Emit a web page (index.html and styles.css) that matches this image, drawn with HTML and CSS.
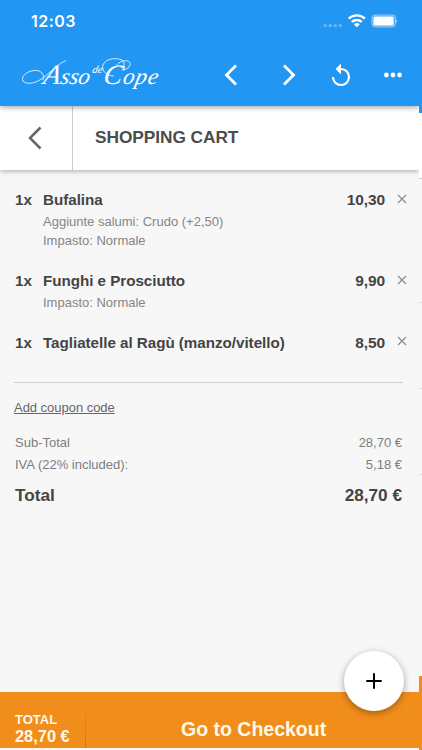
FILE: index.html
```html
<!DOCTYPE html>
<html lang="en">
<head>
<meta charset="utf-8">
<meta name="viewport" content="width=device-width">
<title>Shopping cart</title>
<link rel="stylesheet" href="styles.css">
</head>
<body>
<div class="screen">
  <div class="app">
    <header class="topbar">
      <div class="status">
        <span class="clock">12:03</span>
        <svg class="status-icons" width="78" height="18" viewBox="0 0 78 18" fill="#fff">
          <g opacity=".32"><circle cx="5.300" cy="13.600" r="1.700"/><circle cx="10.300" cy="13.600" r="1.700"/><circle cx="15.300" cy="13.600" r="1.700"/><circle cx="20.300" cy="13.600" r="1.700"/></g>
          <g fill="none" stroke="#fff" stroke-width="2.400"><path d="M28.700 6.600a11.800 11.800 0 0 1 16.200 0"/><path d="M31.800 10a7.200 7.200 0 0 1 10 0"/></g>
          <path d="M36.800 15.300l-3-3a4.200 4.200 0 0 1 6 0z"/>
          <rect x="51.900" y="3" width="23.600" height="12" rx="3.300" fill="#fff" fill-opacity=".15" stroke="#fff" stroke-opacity=".5"/>
          <rect x="53.400" y="4.500" width="20.300" height="9" rx="1.600"/>
          <path d="M76.400 7q1.800 2 0 4z" opacity=".6"/>
        </svg>
      </div>
      <div class="nav">
        <div class="logo">
          <span class="word asso"><span class="cap">A</span>sso</span><span class="word de">de</span><span class="word cope"><span class="cap">C</span>ope</span>
          <svg class="flourish" width="142" height="40" viewBox="0 0 142 40" fill="none" stroke="#fff" stroke-width=".8">
            <path d="M22 22C24 17 20 11.500 13 12.500C5 13.500 1 18.500 1.500 21.500C2 26 10 26.500 17 23C27 18 33 8 45 2.500"/>
            <path d="M93 18C85 18 80 12 82 7C84 1 94-1 101 2C104 4 104 8 100 10M94 10C97 2 108 1 109 5C110 9 105 12 101 12"/>
          </svg>
        </div>
        <div class="actions">
          <svg width="14" height="22" viewBox="0 0 14 22"><path class="line" d="M12 1.500 2.500 11 12 20.500"/></svg>
          <svg class="next" width="14" height="22" viewBox="0 0 14 22"><path class="line" d="M2 1.500 11.500 11 2 20.500"/></svg>
          <svg class="reload" width="20" height="24" viewBox="0 0 20 24"><path d="M2 14a8 8 0 1 0 8-8H8" fill="none" stroke="#fff" stroke-width="2.200"/><path d="M10 .5v11L4.500 6z" fill="#fff"/></svg>
          <svg class="more" width="20" height="6" viewBox="0 0 20 6" fill="#fff"><circle cx="3.400" cy="3" r="2.400"/><circle cx="10" cy="3" r="2.400"/><circle cx="16.600" cy="3" r="2.400"/></svg>
        </div>
      </div>
    </header>
    <div class="titlebar">
      <div class="back"><svg width="16" height="24" viewBox="0 0 16 24"><path d="M14.500 1.500 4 12 14.500 22.500" fill="none" stroke="#666" stroke-width="2.500"/></svg></div>
      <h1>SHOPPING CART</h1>
    </div>
    <main class="cart">
      <ul class="items">
        <li class="item first">
          <span class="qty">1x</span>
          <div class="info"><b>Bufalina</b><small>Aggiunte salumi: Crudo (+2,50)</small><small>Impasto: Normale</small></div>
          <span class="price">10,30</span>
          <svg class="remove" width="10" height="10" viewBox="0 0 10 10"><path d="M1 1l8 8M9 1L1 9"/></svg>
        </li>
        <li class="item second">
          <span class="qty">1x</span>
          <div class="info"><b>Funghi e Prosciutto</b><small>Impasto: Normale</small></div>
          <span class="price">9,90</span>
          <svg class="remove" width="10" height="10" viewBox="0 0 10 10"><path d="M1 1l8 8M9 1L1 9"/></svg>
        </li>
        <li class="item third">
          <span class="qty">1x</span>
          <div class="info"><b>Tagliatelle al Ragù (manzo/vitello)</b></div>
          <span class="price">8,50</span>
          <svg class="remove" width="10" height="10" viewBox="0 0 10 10"><path d="M1 1l8 8M9 1L1 9"/></svg>
        </li>
      </ul>
      <a class="coupon">Add coupon code</a>
      <div class="sum"><span>Sub-Total</span><span>28,70 €</span></div>
      <div class="sum"><span>IVA (22% included):</span><span>5,18 €</span></div>
      <div class="sum total"><span>Total</span><span>28,70 €</span></div>
    </main>
    <footer class="checkout">
      <div class="amount"><span class="label">TOTAL</span><span class="value">28,70 €</span></div>
      <div class="go">Go to Checkout</div>
      <div class="fab"><svg width="16" height="16" viewBox="0 0 16 16"><path d="M8 .3v15.400M.3 8h15.400" stroke="#000" stroke-width="2"/></svg></div>
    </footer>
  </div>
  <div class="behind">
    <div class="b-blue"></div><div class="b-white"></div>
    <div class="b-row r1"></div><div class="b-row r2"></div><div class="b-row r3"></div>
    <div class="b-rest"></div><div class="b-orange"></div>
  </div>
</div>
</body>
</html>
```
FILE: styles.css
```css
* { box-sizing: border-box; }
body { margin: 0; font-family: "Liberation Sans", Arial, sans-serif; background: #f7f7f7; }
svg { display: block; flex: none; }
.screen { display: grid; grid-template-columns: 419px 3px; width: 422px; height: 750px; overflow: hidden; }
.app { display: flex; flex-direction: column; height: 750px; background: #f7f7f7; white-space: nowrap; clip-path: inset(0); }

.topbar { height: 106px; flex: none; background: #2296f3; color: #fff; box-shadow: 0 1px 6px rgba(0,0,0,.4); z-index: 2; }
.status { height: 44px; display: flex; justify-content: space-between; padding: 12px 21px 0 31px; }
.clock { font: 600 16px/18px Inter, sans-serif; letter-spacing: .45px; }
.nav { display: flex; justify-content: space-between; height: 62px; padding: 0 16px 0 21px; }
.logo { position: relative; width: 142px; display: flex; padding: 12px 0 0 22px; font-family: "Liberation Serif", serif; font-style: italic; }
.word { font-size: 23px; line-height: 42px; transform: skewX(-12deg); }
.cap { font-size: 28px; line-height: 30px; }
.asso { width: 47px; }
.de { font-size: 11px; line-height: 27px; width: 13px; }
.cope { font-size: 23px; letter-spacing: .9px; }
.flourish { position: absolute; left: 0; top: 14px; overflow: visible; }
.actions { display: flex; align-items: center; width: 179px; }
.next { margin-left: 44px; }
.reload { margin-left: 35px; }
.more { margin-left: 32px; }
.line { fill: none; stroke: #fff; stroke-width: 2.8; }

.titlebar { height: 64px; flex: none; display: flex; background: #fff; box-shadow: 0 1px 5px rgba(0,0,0,.32); z-index: 1; }
.back { width: 73px; border-right: 1px solid #ccc; display: flex; align-items: center; padding-left: 26px; }
h1 { margin: 0; padding-left: 22px; font-size: 17.300px; line-height: 63px; color: #4c4c4c; letter-spacing: -.05px; }

.cart { flex: 1; padding: 20px 16px 0 14px; color: #7d7d7d; }
.items { list-style: none; margin: 0; padding: 0 0 0 1px; height: 193px; border-bottom: 1.500px solid #cfcfcf; }
.item { display: flex; font-size: 15.200px; line-height: 20px; color: #444; }
.first { height: 81px; }
.second { height: 62px; }
.third { line-height: 19px; }
.qty, .price { font-weight: bold; }
.qty { width: 28px; }
.info { flex: 1; }
.info b { display: block; letter-spacing: -.03px; }
small { display: block; font-size: 13px; line-height: 19px; color: #858585; }
.info b + small { padding-top: 2px; }
.price { width: 60px; text-align: right; font-size: 15.500px; letter-spacing: -.1px; }
.remove { margin: 4px -4px 0 12px; fill: none; stroke: #888; stroke-width: 1.1; }
.third .remove { margin-top: 3px; }
.coupon { display: inline-block; margin-top: 16px; font-size: 13px; line-height: 18px; text-decoration: underline; color: #666; letter-spacing: -.03px; }
.sum { display: flex; justify-content: space-between; padding: 0 1px; font-size: 13px; line-height: 22px; }
.coupon + .sum { margin-top: 15px; }
.total { font-weight: bold; font-size: 17.200px; line-height: 24px; color: #444; margin-top: 7px; }

.checkout { position: relative; height: 58.500px; flex: none; display: flex; background: #f18d1a; border-bottom: 2px solid #fafafa; color: #fff9e8; font-weight: bold; }
.amount { width: 86px; padding: 20px 0 0 15px; display: flex; flex-direction: column; border-style: solid; border-image: linear-gradient(transparent 20%, #ce7517) 1; border-width: 0 1px 0 0; }
.label { font-size: 13px; line-height: 16px; }
.value { font-size: 16.400px; line-height: 16px; }
.go { padding-left: 95px; font-size: 19.500px; line-height: 74px; height: 56px; }
.fab { position: absolute; left: 344px; top: -41px; width: 60px; height: 60px; border-radius: 50%; background: #fff; box-shadow: 0 2px 7px rgba(0,0,0,.35); display: flex; align-items: center; justify-content: center; }

.behind { display: flex; flex-direction: column; background: #f7f7f7; }
.behind > div { flex: none; }
.b-blue { height: 113px; background: #2296f3; }
.b-white { height: 65px; background: #fff; }
.b-row { border-bottom: 1px solid #dedede; }
.r1 { height: 125px; border-top: 1px solid #ccc; }
.r2 { height: 86px; }
.r3 { height: 86px; }
.b-rest { height: 201px; }
.b-orange { height: 74px; background: #f18d1a; }
```
